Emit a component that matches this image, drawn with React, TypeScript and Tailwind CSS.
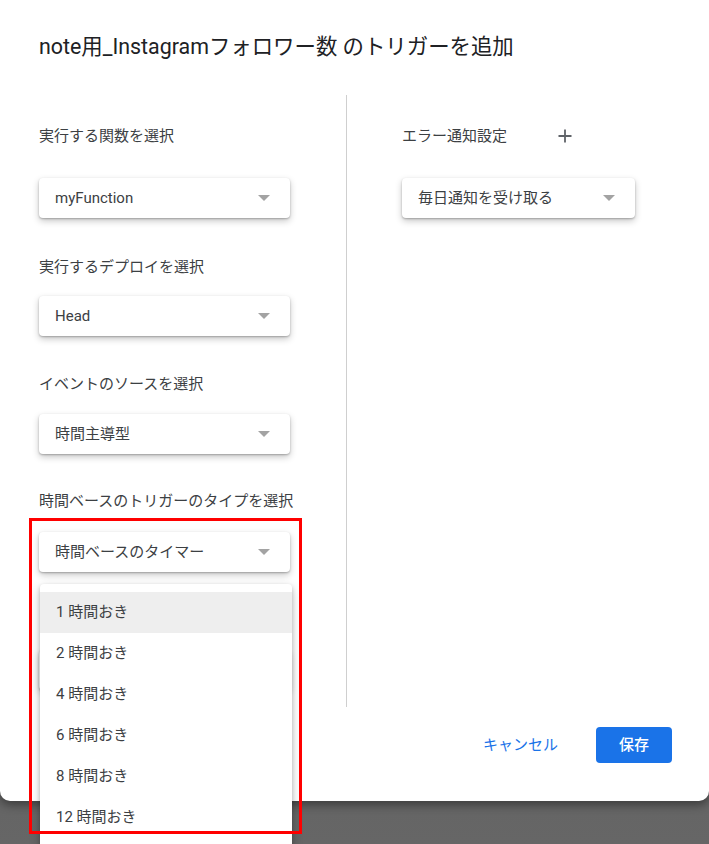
import React from "react";

const font = { fontFamily: "Roboto, 'Noto Sans CJK JP', 'Noto Sans', sans-serif" };

function Select({ value, w }: { value: string; w: string }) {
  return (
    <div
      className={`${w} h-[40px] rounded-[4px] bg-white flex items-center justify-between pl-[16px] pr-[20px] shadow-[0_1px_2px_rgba(0,0,0,0.25),0_3px_7px_rgba(0,0,0,0.22)]`}
    >
      <span className="text-[15px] text-[#3c4043]">{value}</span>
      <span className="w-0 h-0 border-l-[6px] border-r-[6px] border-t-[6px] border-l-transparent border-r-transparent border-t-[#a3a3a3]" />
    </div>
  );
}

function Label({ children, className = "" }: { children: React.ReactNode; className?: string }) {
  return <div className={`text-[15px] leading-[20px] text-[#3c4043] ${className}`}>{children}</div>;
}

export default function App() {
  const items = ["1 時間おき", "2 時間おき", "4 時間おき", "6 時間おき", "8 時間おき", "12 時間おき"];
  return (
    <div
      className="w-[709px] h-[844px] relative overflow-hidden bg-gradient-to-b from-[#4e4e4e] to-[#666666]"
      style={font}
    >
      <div className="bg-white h-[801px] rounded-b-[10px] shadow-[0_4px_10px_rgba(0,0,0,0.4)] flex flex-col">
        <h1 className="pl-[39px] pt-[33px] text-[21.4px] leading-[28px] text-[#202124] font-normal">
          note用_Instagramフォロワー数 のトリガーを追加
        </h1>
        <div className="flex mt-[34px] h-[612px]">
          <div className="w-[347px] border-r border-[#cfcfcf] pl-[39px] pt-[31px] flex flex-col">
            <Label>実行する関数を選択</Label>
            <div className="mt-[32px]">
              <Select value="myFunction" w="w-[251px]" />
            </div>
            <Label className="mt-[39px]">実行するデプロイを選択</Label>
            <div className="mt-[19px]">
              <Select value="Head" w="w-[251px]" />
            </div>
            <Label className="mt-[38px]">イベントのソースを選択</Label>
            <div className="mt-[20px]">
              <Select value="時間主導型" w="w-[251px]" />
            </div>
            <Label className="mt-[37px]">時間ベースのトリガーのタイプを選択</Label>
            <div className="mt-[21px]">
              <Select value="時間ベースのタイマー" w="w-[251px]" />
            </div>
            <div className="mt-[38px] h-[20px]" />
            <div className="mt-[20px]">
              <Select value="" w="w-[251px]" />
            </div>
          </div>
          <div className="pl-[55px] pt-[31px] flex flex-col">
            <div className="flex items-center">
              <Label>エラー通知設定</Label>
              <svg className="ml-[51px]" width="14" height="14" viewBox="0 0 14 14">
                <path d="M7 0.5V13.5M0.5 7H13.5" stroke="#5f6368" strokeWidth="1.8" />
              </svg>
            </div>
            <div className="mt-[32px]">
              <Select value="毎日通知を受け取る" w="w-[233px]" />
            </div>
          </div>
        </div>
        <div className="flex justify-end items-center mt-[20px] pr-[37px]">
          <button className="h-[36px] px-[15px] text-[15px] text-[#1a73e8]">キャンセル</button>
          <button className="ml-[23px] h-[36px] w-[76px] rounded-[4px] bg-[#1a73e8] text-white text-[15px] font-medium">
            保存
          </button>
        </div>
      </div>

      <div className="absolute left-[40px] top-[584px] w-[252px] h-[300px] bg-white rounded-[4px] pt-[8px] shadow-[0_2px_4px_rgba(0,0,0,0.2),0_4px_12px_rgba(0,0,0,0.2)]">
        {items.map((it, i) => (
          <div
            key={it}
            className={`h-[41px] flex items-center pl-[16px] text-[15px] text-[#3c4043] ${i === 0 ? "bg-[#eeeeee]" : ""}`}
          >
            {it}
          </div>
        ))}
      </div>

      <div className="absolute left-[29px] top-[518px] w-[273px] h-[316px] border-[3px] border-[#ff0000]" />
    </div>
  );
}
